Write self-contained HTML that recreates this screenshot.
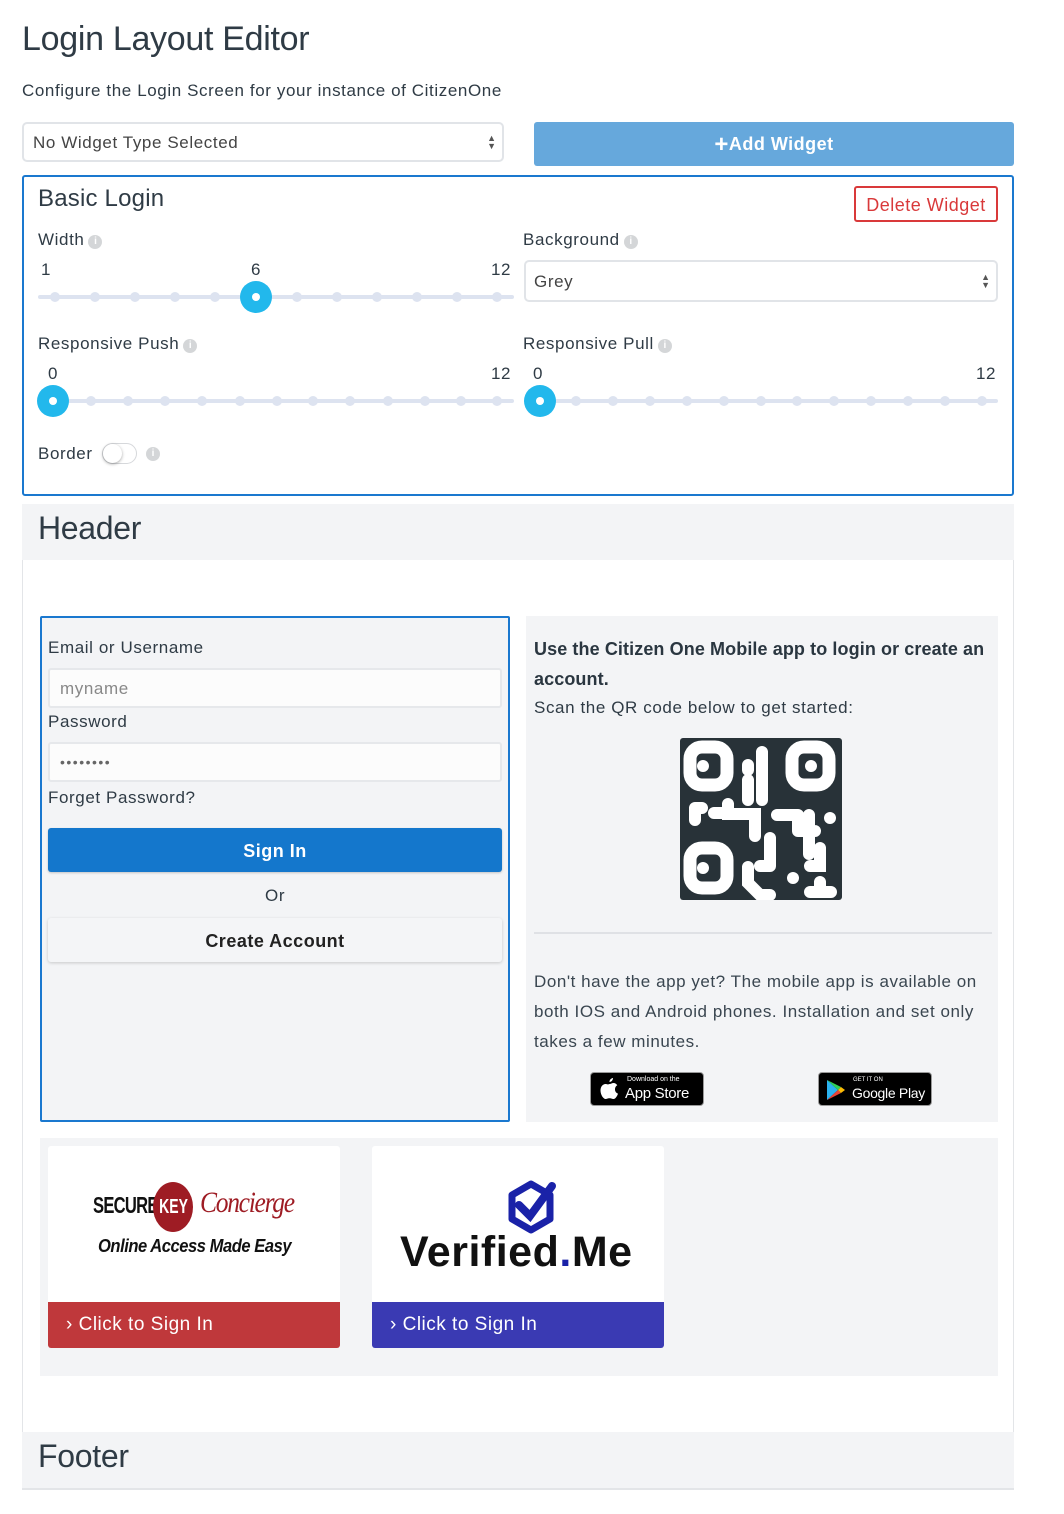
<!DOCTYPE html>
<html><head><meta charset="utf-8"><style>
*{box-sizing:border-box;margin:0;padding:0}
body{width:1064px;height:1514px;background:#fff;font-family:"Liberation Sans",sans-serif;color:#2f3b45;position:relative;overflow:hidden}
.a{position:absolute}
.t{font-size:17px;white-space:nowrap;letter-spacing:0.6px}
.info{display:inline-block;width:14px;height:14px;border-radius:50%;background:#d4d6d8;color:#fff;font-size:10px;text-align:center;line-height:14px;font-weight:bold;vertical-align:1px;margin-left:4px;letter-spacing:0}
.track{position:absolute;height:4px;background:#dde3f0;border-radius:2px}
.tick{position:absolute;width:10px;height:10px;border-radius:50%;background:#dde3f0;margin:-5px 0 0 -5px}
.handle{position:absolute;width:32px;height:32px;border-radius:50%;background:#22b8ec;margin:-16px 0 0 -16px}
.handle:after{content:"";position:absolute;left:12px;top:12px;width:8px;height:8px;border-radius:50%;background:#fff}
.sel{border:2px solid #e1e4e8;border-radius:5px;background:#fff}
.arr{position:absolute;right:6px;top:50%;margin-top:-8px;font-size:9px;line-height:8px;color:#555}
.gray{background:#f3f4f6}
.inp{position:absolute;background:#fcfcfc;border:2px solid #e6e8eb;border-radius:3px}
</style></head><body>
<div class="a" style="left:22px;top:20px;font-size:34px;letter-spacing:-0.3px">Login Layout Editor</div>
<div class="a t" style="left:22px;top:81px">Configure the Login Screen for your instance of CitizenOne</div>

<div class="a sel" style="left:22px;top:122px;width:482px;height:40px"><span class="a t" style="left:9px;top:9px;color:#444">No Widget Type Selected</span><div class="arr">▲<br>▼</div></div>
<div class="a" style="left:534px;top:122px;width:480px;height:44px;background:#66a8dc;border-radius:3px;color:#fff;font-weight:bold;font-size:18px;text-align:center;line-height:44px;letter-spacing:0.5px"><span style="font-size:24px;vertical-align:-2px">+</span>Add Widget</div>

<div class="a" style="left:22px;top:175px;width:992px;height:321px;border:2px solid #1a78cf;border-radius:3px"></div>
<div class="a" style="left:38px;top:185px;font-size:24px;letter-spacing:0.2px">Basic Login</div>
<div class="a" style="left:854px;top:186px;width:144px;height:36px;border:2px solid #d9393a;border-radius:3px;color:#d9393a;font-size:18px;text-align:center;line-height:34px;letter-spacing:0.5px">Delete Widget</div>

<div class="a t" style="left:38px;top:230px">Width<span class="info">i</span></div>
<div class="a t" style="left:41px;top:260px">1</div><div class="a t" style="left:251px;top:260px">6</div><div class="a t" style="left:491px;top:260px">12</div>
<div class="track" style="left:38px;top:295px;width:476px"></div>
<div class="a" style="left:0;top:297px">
<div class="tick" style="left:55px"></div><div class="tick" style="left:95px"></div><div class="tick" style="left:135px"></div><div class="tick" style="left:175px"></div><div class="tick" style="left:215px"></div><div class="tick" style="left:297px"></div><div class="tick" style="left:337px"></div><div class="tick" style="left:377px"></div><div class="tick" style="left:417px"></div><div class="tick" style="left:457px"></div><div class="tick" style="left:497px"></div>
<div class="handle" style="left:256px"></div></div>

<div class="a t" style="left:523px;top:230px">Background<span class="info">i</span></div>
<div class="a sel" style="left:524px;top:260px;width:474px;height:42px"><span class="a t" style="left:8px;top:10px;color:#444">Grey</span><div class="arr">▲<br>▼</div></div>

<div class="a t" style="left:38px;top:334px">Responsive Push<span class="info">i</span></div>
<div class="a t" style="left:48px;top:364px">0</div><div class="a t" style="left:491px;top:364px">12</div>
<div class="track" style="left:38px;top:399px;width:476px"></div>
<div class="a" style="left:0;top:401px">
<div class="tick" style="left:91px"></div><div class="tick" style="left:128px"></div><div class="tick" style="left:165px"></div><div class="tick" style="left:202px"></div><div class="tick" style="left:240px"></div><div class="tick" style="left:277px"></div><div class="tick" style="left:313px"></div><div class="tick" style="left:350px"></div><div class="tick" style="left:388px"></div><div class="tick" style="left:425px"></div><div class="tick" style="left:461px"></div><div class="tick" style="left:497px"></div>
<div class="handle" style="left:53px"></div></div>

<div class="a t" style="left:523px;top:334px">Responsive Pull<span class="info">i</span></div>
<div class="a t" style="left:533px;top:364px">0</div><div class="a t" style="left:976px;top:364px">12</div>
<div class="track" style="left:524px;top:399px;width:474px"></div>
<div class="a" style="left:0;top:401px">
<div class="tick" style="left:576px"></div><div class="tick" style="left:613px"></div><div class="tick" style="left:650px"></div><div class="tick" style="left:687px"></div><div class="tick" style="left:724px"></div><div class="tick" style="left:761px"></div><div class="tick" style="left:797px"></div><div class="tick" style="left:834px"></div><div class="tick" style="left:871px"></div><div class="tick" style="left:908px"></div><div class="tick" style="left:945px"></div><div class="tick" style="left:982px"></div>
<div class="handle" style="left:540px"></div></div>

<div class="a t" style="left:38px;top:444px">Border</div>
<div class="a" style="left:102px;top:443px;width:35px;height:21px;border:1px solid #d6d8db;border-radius:11px;background:#fff"><div class="a" style="left:0;top:0;width:19px;height:19px;border-radius:50%;background:#fff;box-shadow:0 1px 3px rgba(0,0,0,.35)"></div></div>
<div class="a" style="left:142px;top:444px"><span class="info">i</span></div>

<div class="a" style="left:22px;top:504px;width:992px;height:986px;border:1px solid #e3e5e8;border-top:none"></div>
<div class="a gray" style="left:22px;top:504px;width:992px;height:56px"></div>
<div class="a" style="left:38px;top:510px;font-size:32px;letter-spacing:-0.3px">Header</div>

<div class="a gray" style="left:40px;top:616px;width:470px;height:506px;border:2px solid #1a78cf;border-radius:2px"></div>
<div class="a t" style="left:48px;top:638px">Email or Username</div>
<div class="inp" style="left:48px;top:668px;width:454px;height:40px"><span class="a t" style="left:10px;top:9px;color:#888">myname</span></div>
<div class="a t" style="left:48px;top:712px">Password</div>
<div class="inp" style="left:48px;top:742px;width:454px;height:40px"><span class="a" style="left:10px;top:10px;color:#666;font-size:14px;letter-spacing:1.5px">••••••••</span></div>
<div class="a t" style="left:48px;top:788px">Forget Password?</div>
<div class="a" style="left:48px;top:828px;width:454px;height:44px;background:#1477cc;border-radius:3px;color:#fff;font-weight:bold;font-size:18px;text-align:center;line-height:46px;letter-spacing:0.5px;box-shadow:0 1px 2px rgba(0,0,0,.2)">Sign In</div>
<div class="a t" style="left:265px;top:886px">Or</div>
<div class="a" style="left:48px;top:918px;width:454px;height:44px;background:#f4f5f7;border-radius:3px;color:#222;font-weight:bold;font-size:18px;text-align:center;line-height:46px;letter-spacing:0.5px;box-shadow:0 1px 3px rgba(0,0,0,.18)">Create Account</div>

<div class="a gray" style="left:526px;top:616px;width:472px;height:506px"></div>
<div class="a" style="left:534px;top:634px;width:462px;font-size:18px;font-weight:bold;line-height:30px;color:#2a3640;letter-spacing:0.1px">Use the Citizen One Mobile app to login or create an account.</div>
<div class="a t" style="left:534px;top:698px">Scan the QR code below to get started:</div>
<svg class="a" style="left:680px;top:738px" width="162" height="162" viewBox="0 0 162 162">
<rect width="162" height="162" rx="3" fill="#283238"/>
<g fill="none" stroke="#fff" stroke-linecap="round">
<rect x="10" y="9" width="37" height="38" rx="12" stroke-width="13"/>
<rect x="112" y="9" width="37" height="38" rx="12" stroke-width="13"/>
<rect x="10" y="110" width="37" height="40" rx="12" stroke-width="13"/>
<g stroke-width="12">
<path d="M68 62V42M68 32V27M82 14V62M82 14"/>
<path d="M15 70V82M15 70H22"/>
<path d="M34 75H45M48 66V76H75V98"/>
<path d="M97 77H118M118 77V93M118 93H135M129 77V116"/>
<path d="M150 80V80"/>
<path d="M90 100V128M80 128H88"/>
<path d="M140 110V128H130"/>
<path d="M68 129V145L80 157H90"/>
<path d="M113 140V140"/>
<path d="M130 154H151M140 144V154"/>
</g></g>
<circle cx="23" cy="28" r="6" fill="#fff"/><circle cx="131" cy="28" r="6" fill="#fff"/><circle cx="23" cy="130" r="6" fill="#fff"/>
</svg>
<div class="a" style="left:534px;top:932px;width:458px;height:2px;background:#dfe1e5"></div>
<div class="a" style="left:534px;top:967px;width:460px;font-size:17px;line-height:30px;color:#3a4650;letter-spacing:0.55px">Don't have the app yet? The mobile app is available on both IOS and Android phones. Installation and set only takes a few minutes.</div>
<div class="a" style="left:590px;top:1072px;width:114px;height:34px;background:#000;border-radius:4px;border:1px solid #999;color:#fff">
<svg class="a" style="left:9px;top:5px" width="19" height="22" viewBox="0 0 19 22"><path d="M13 0C13 2 11.5 4 9.5 4C9.3 2 11 0.3 13 0Z" fill="#fff"/><path d="M9.5 6C11 6 12 5 13.5 5C15 5 16.5 6 17.3 7.3C15.5 8.4 15 10 15 11.5C15 13.5 16.3 15 18 15.6C17.5 17.5 15.5 21 13.5 21C12 21 11.5 20.2 9.5 20.2C7.5 20.2 7 21 5.5 21C3.5 21 0.5 17 0.5 12.5C0.5 8.5 3 6 5.5 6C7 6 8 6.9 9.5 6Z" fill="#fff"/></svg>
<div class="a" style="left:36px;top:3px;font-size:7px">Download on the</div>
<div class="a" style="left:34px;top:12px;font-size:15px;letter-spacing:-0.3px">App Store</div></div>
<div class="a" style="left:818px;top:1072px;width:114px;height:34px;background:#000;border-radius:4px;border:1px solid #999;color:#fff">
<svg class="a" style="left:7px;top:6px" width="20" height="22" viewBox="0 0 20 22"><path d="M1 1L12 11L1 21Z" fill="#2bb3f0"/><path d="M1 1L15 8L12 11Z" fill="#30d158"/><path d="M1 21L15 14L12 11Z" fill="#ea4335"/><path d="M15 8L19 11L15 14L12 11Z" fill="#fbbc04"/></svg>
<div class="a" style="left:34px;top:4px;font-size:6px">GET IT ON</div>
<div class="a" style="left:33px;top:12px;font-size:14px;letter-spacing:-0.3px">Google Play</div></div>

<div class="a gray" style="left:40px;top:1138px;width:958px;height:238px"></div>
<div class="a" style="left:48px;top:1146px;width:292px;height:202px;background:#fff;border-radius:3px;overflow:hidden">
<div class="a" style="left:45px;top:46px;font-weight:bold;font-size:23px;letter-spacing:-1px;color:#111;transform:scaleX(.72);transform-origin:left">SECURE</div>
<div class="a" style="left:105px;top:36px;width:40px;height:50px;border-radius:50%;background:#9e1c24;color:#fff;font-weight:bold;font-size:20px;text-align:center;line-height:50px"><span style="display:inline-block;transform:scaleX(.7)">KEY</span></div>
<div class="a" style="left:152px;top:40px;font-family:'Liberation Serif',serif;font-style:italic;font-size:30px;color:#9e1c24;letter-spacing:-1.5px;transform:scaleX(.85);transform-origin:left">Concierge</div>
<div class="a" style="left:50px;top:90px;font-style:italic;font-weight:bold;font-size:18px;color:#111;letter-spacing:-0.5px;transform:scaleX(.92);transform-origin:left">Online Access Made Easy</div>
<div class="a" style="left:0;top:156px;width:292px;height:46px;background:#bf383b;color:#fff;font-size:19px;line-height:46px;padding-left:18px;letter-spacing:0.5px">› Click to Sign In</div></div>
<div class="a" style="left:372px;top:1146px;width:292px;height:202px;background:#fff;border-radius:3px;overflow:hidden">
<svg class="a" style="left:130px;top:32px" width="58" height="58" viewBox="0 0 58 58"><path d="M29 6L48 17V41L29 52L10 41V17Z" fill="none" stroke="#1a22a8" stroke-width="7" stroke-linejoin="round"/><path d="M17 27L28 38L50 8" fill="none" stroke="#1a22a8" stroke-width="8" stroke-linecap="round"/></svg>
<div class="a" style="left:28px;top:82px;font-weight:bold;font-size:43px;letter-spacing:0.5px;color:#111">Verified<span style="color:#1a22a8">.</span>Me</div>
<div class="a" style="left:0;top:156px;width:292px;height:46px;background:#3a3ab3;color:#fff;font-size:19px;line-height:46px;padding-left:18px;letter-spacing:0.5px">› Click to Sign In</div></div>

<div class="a gray" style="left:22px;top:1432px;width:992px;height:58px;border-bottom:2px solid #e3e5e8"></div>
<div class="a" style="left:38px;top:1438px;font-size:32px;letter-spacing:-0.3px">Footer</div>
</body></html>
